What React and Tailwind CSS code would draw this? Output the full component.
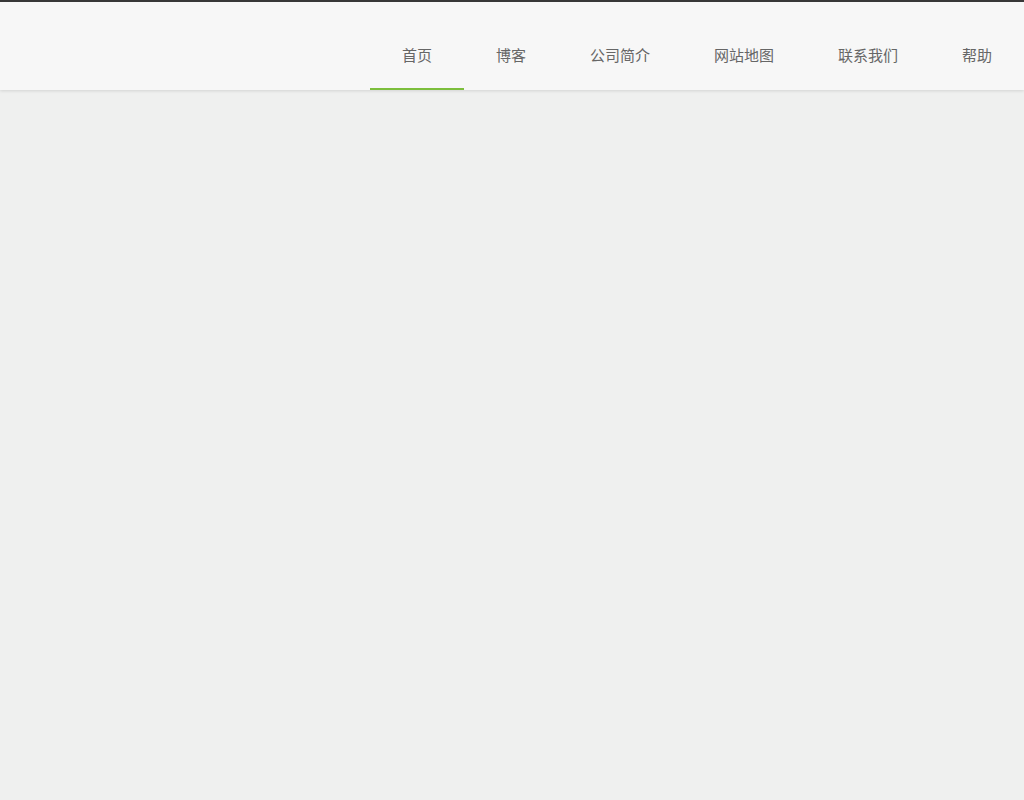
export default function App() {
  const items = ["首页", "博客", "公司简介", "网站地图", "联系我们", "帮助"];
  return (
    <div className="min-h-screen bg-[#eff0ef]" style={{ fontFamily: '"Noto Sans CJK SC", "Noto Sans", sans-serif' }}>
      <header className="border-t-2 border-[#383838] bg-[#f7f7f7] shadow-[0_1px_3px_rgba(0,0,0,0.12)] relative">
        <nav className="flex justify-end h-[88px]">
          {items.map((t, i) => (
            <a
              key={t}
              className={`block px-8 pt-[42px] text-[15px] leading-[22px] text-[#666] border-b-2 ${i === 0 ? "border-[#7cbe3c]" : "border-transparent"}`}
            >
              {t}
            </a>
          ))}
        </nav>
      </header>
    </div>
  );
}
